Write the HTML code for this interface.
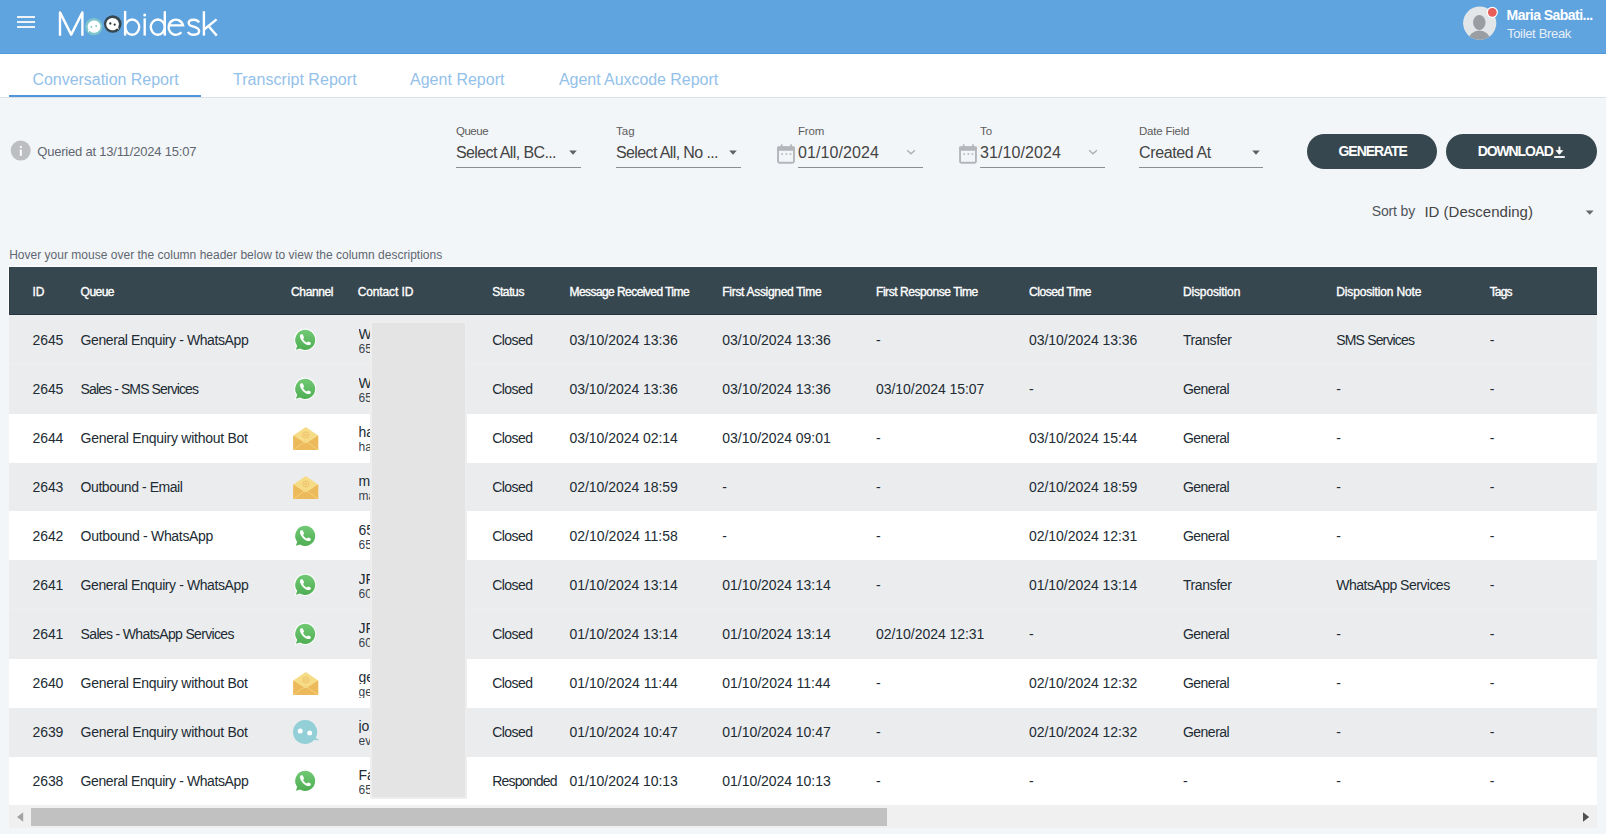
<!DOCTYPE html>
<html><head><meta charset="utf-8"><title>Moobidesk - Conversation Report</title>
<style>
html,body{margin:0;padding:0;}
body{width:1606px;height:834px;overflow:hidden;position:relative;background:#f3f6f9;font-family:"Liberation Sans",sans-serif;}
.t{position:absolute;white-space:nowrap;}
.b{position:absolute;}
svg{position:absolute;overflow:visible;}
</style></head><body>
<div class="b" style="left:0.00px;top:0.00px;width:1606.00px;height:54.00px;background:#5fa3df;"></div>
<div class="b" style="left:0.00px;top:53.00px;width:1606.00px;height:1.00px;background:#519ada;"></div>
<div class="b" style="left:16.50px;top:16.00px;width:18.50px;height:2.30px;background:#eef3f8;"></div>
<div class="b" style="left:16.50px;top:21.00px;width:18.50px;height:2.30px;background:#eef3f8;"></div>
<div class="b" style="left:16.50px;top:26.00px;width:18.50px;height:2.30px;background:#eef3f8;"></div>
<svg style="left:0;top:0" width="240" height="54" viewBox="0 0 240 54">
<g fill="none" stroke="#fff" stroke-width="2.4" stroke-linecap="butt" stroke-linejoin="miter">
<path d="M60 35.8 V12.4 L71.2 34.6 L82.4 12.4 V35.8" stroke-linejoin="round"/>
<path d="M125.1 10.9 V35.6"/>
<ellipse cx="132.2" cy="27.1" rx="7.0" ry="7.6"/>
<path d="M144.7 18.4 V35.6"/>
<ellipse cx="157.8" cy="27.1" rx="7.0" ry="7.6"/>
<path d="M164.8 11.2 V35.6"/>
<path d="M170 25.4 H183 A7.3 7.6 0 1 0 181.4 32.3"/>
<path d="M199 22.6 C198 20.3 196 19.7 193.6 19.7 C190.5 19.7 188.7 21.1 188.7 23 C188.7 25.2 190.8 26 193.6 26.7 C196.8 27.5 199.1 28.5 199.1 31.1 C199.1 33.5 197 34.8 193.6 34.8 C190.8 34.8 188.8 33.8 188 31.9"/>
<path d="M203.9 11.2 V35.6"/>
<path d="M216.6 19.4 L204.4 29.2"/>
<path d="M208.4 26 L216.8 35.6"/>
</g>
<circle cx="144.7" cy="15.1" r="1.5" fill="#fff"/>
<circle cx="93.8" cy="26.6" r="8.7" fill="#7fc6cc"/>
<path d="M94.3 20.4 a6.2 6.2 0 1 1 -4.7 10.3 l-1.8 1.8 l0.7 -2.9 a6.2 6.2 0 0 1 5.8 -9.2z" fill="#fff"/>
<circle cx="91.4" cy="27" r="0.9" fill="#7fc6cc"/><circle cx="96.2" cy="26" r="0.9" fill="#7fc6cc"/>
<circle cx="112.8" cy="24" r="8.8" fill="#37474f"/>
<path d="M112.4 17.9 a6.2 6.2 0 1 0 4.7 10.3 l1.8 1.7 l-0.7 -2.9 a6.2 6.2 0 0 0 -5.8 -9.1z" fill="#fff"/>
<circle cx="110.3" cy="23.5" r="1.15" fill="#263238"/><circle cx="114.7" cy="24.6" r="1.15" fill="#263238"/>
</svg>
<svg style="left:1440px;top:0" width="80" height="54" viewBox="1440 0 80 54">
<defs><clipPath id="avc"><circle cx="1479.7" cy="23.2" r="16.6"/></clipPath></defs>
<circle cx="1479.7" cy="23.2" r="16.6" fill="#e3e6e8"/>
<g clip-path="url(#avc)" fill="#9a9da2">
<ellipse cx="1479.3" cy="22.5" rx="6.2" ry="7.6"/>
<ellipse cx="1479.3" cy="40.5" rx="11" ry="10"/>
</g>
<circle cx="1492.3" cy="12.3" r="5.6" fill="#fff"/>
<circle cx="1492.3" cy="12.3" r="4.4" fill="#e85c5a"/>
</svg>
<div class="t" style="left:1506.60px;top:7.95px;font-size:14px;line-height:14px;color:#ffffff;font-weight:bold;letter-spacing:-0.542px;">Maria Sabati...</div>
<div class="t" style="left:1507.00px;top:27.30px;font-size:13px;line-height:13px;color:#e9eff6;letter-spacing:-0.328px;">Toilet Break</div>
<div class="b" style="left:0.00px;top:54.00px;width:1606.00px;height:43.00px;background:#fff;"></div>
<div class="b" style="left:0.00px;top:97.00px;width:1606.00px;height:1.00px;background:#dde1e5;"></div>
<div class="b" style="left:9.00px;top:94.50px;width:192.00px;height:2.50px;background:#4e95dc;"></div>
<div class="t" style="left:32.40px;top:71.86px;font-size:16px;line-height:16px;color:#93c1ea;letter-spacing:-0.024px;">Conversation Report</div>
<div class="t" style="left:233.00px;top:71.86px;font-size:16px;line-height:16px;color:#93c1ea;letter-spacing:0.036px;">Transcript Report</div>
<div class="t" style="left:410.00px;top:71.86px;font-size:16px;line-height:16px;color:#93c1ea;letter-spacing:0.020px;">Agent Report</div>
<div class="t" style="left:559.00px;top:71.86px;font-size:16px;line-height:16px;color:#93c1ea;letter-spacing:-0.052px;">Agent Auxcode Report</div>
<svg style="left:0;top:130px" width="40" height="40" viewBox="0 130 40 40">
<circle cx="20.7" cy="150.6" r="10" fill="#bdbec1"/>
<rect x="19.85" y="149.6" width="1.9" height="6.2" fill="#fff"/>
<rect x="19.85" y="146" width="1.9" height="1.9" fill="#fff"/>
</svg>
<div class="t" style="left:37.30px;top:145.20px;font-size:13px;line-height:13px;color:#5f6770;letter-spacing:-0.208px;">Queried at 13/11/2024 15:07</div>
<div class="t" style="left:456.00px;top:126.07px;font-size:11.5px;line-height:11.5px;color:#5c5c5c;letter-spacing:-0.500px;">Queue</div>
<div class="t" style="left:616.00px;top:126.07px;font-size:11.5px;line-height:11.5px;color:#5c5c5c;letter-spacing:0.023px;">Tag</div>
<div class="t" style="left:798.00px;top:126.07px;font-size:11.5px;line-height:11.5px;color:#5c5c5c;letter-spacing:-0.157px;">From</div>
<div class="t" style="left:980.00px;top:126.07px;font-size:11.5px;line-height:11.5px;color:#5c5c5c;letter-spacing:0.080px;">To</div>
<div class="t" style="left:1139.00px;top:126.07px;font-size:11.5px;line-height:11.5px;color:#5c5c5c;letter-spacing:-0.221px;">Date Field</div>
<div class="t" style="left:456.00px;top:145.26px;font-size:16px;line-height:16px;color:#444444;letter-spacing:-0.610px;">Select All, BC...</div>
<div class="t" style="left:616.00px;top:145.26px;font-size:16px;line-height:16px;color:#444444;letter-spacing:-0.615px;">Select All, No ...</div>
<div class="t" style="left:798.00px;top:145.26px;font-size:16px;line-height:16px;color:#444444;letter-spacing:0.084px;">01/10/2024</div>
<div class="t" style="left:980.00px;top:145.26px;font-size:16px;line-height:16px;color:#444444;letter-spacing:0.084px;">31/10/2024</div>
<div class="t" style="left:1139.00px;top:145.26px;font-size:16px;line-height:16px;color:#444444;letter-spacing:-0.367px;">Created At</div>
<div class="b" style="left:456.00px;top:166.50px;width:125.00px;height:1.30px;background:#8d8d8d;"></div>
<div class="b" style="left:616.00px;top:166.50px;width:124.50px;height:1.30px;background:#8d8d8d;"></div>
<div class="b" style="left:798.00px;top:166.50px;width:125.00px;height:1.30px;background:#8d8d8d;"></div>
<div class="b" style="left:980.00px;top:166.50px;width:125.00px;height:1.30px;background:#8d8d8d;"></div>
<div class="b" style="left:1139.00px;top:166.50px;width:124.00px;height:1.30px;background:#8d8d8d;"></div>
<svg style="left:567px;top:146px" width="12" height="12" viewBox="567 146 12 12"><path d="M569.2 150.4 L576.8 150.4 L573 154.7z" fill="#606060"/></svg>
<svg style="left:726.5px;top:146px" width="12" height="12" viewBox="726.5 146 12 12"><path d="M728.7 150.4 L736.3 150.4 L732.5 154.7z" fill="#606060"/></svg>
<svg style="left:1250px;top:146px" width="12" height="12" viewBox="1250 146 12 12"><path d="M1252.2 150.4 L1259.8 150.4 L1256 154.7z" fill="#606060"/></svg>
<svg style="left:904.6px;top:145px" width="12" height="12" viewBox="904.6 145 12 12"><path d="M906.7 150.3 L910.6 153.8 L914.5 150.3" fill="none" stroke="#aaadb2" stroke-width="1.3"/></svg>
<svg style="left:1086.8px;top:145px" width="12" height="12" viewBox="1086.8 145 12 12"><path d="M1088.8999999999999 150.3 L1092.8 153.8 L1096.7 150.3" fill="none" stroke="#aaadb2" stroke-width="1.3"/></svg>
<svg style="left:777.3px;top:144px" width="19" height="20" viewBox="0 0 19 20">
<rect x="1.05" y="3.3" width="15.9" height="15.45" rx="1.4" fill="none" stroke="#b3b6ba" stroke-width="1.9"/>
<rect x="0.1" y="2.4" width="17.8" height="4.3" rx="1" fill="#b3b6ba"/>
<rect x="3.8" y="0.4" width="1.8" height="2.4" fill="#b3b6ba"/><rect x="13.1" y="0.4" width="1.8" height="2.4" fill="#b3b6ba"/>
<rect x="4.3" y="9.2" width="1.7" height="1.7" fill="#b6b9bd"/><rect x="8.5" y="9.2" width="1.7" height="1.7" fill="#b6b9bd"/><rect x="12.6" y="9.2" width="1.7" height="1.7" fill="#b6b9bd"/>
</svg>
<svg style="left:959.4px;top:144px" width="19" height="20" viewBox="0 0 19 20">
<rect x="1.05" y="3.3" width="15.9" height="15.45" rx="1.4" fill="none" stroke="#b3b6ba" stroke-width="1.9"/>
<rect x="0.1" y="2.4" width="17.8" height="4.3" rx="1" fill="#b3b6ba"/>
<rect x="3.8" y="0.4" width="1.8" height="2.4" fill="#b3b6ba"/><rect x="13.1" y="0.4" width="1.8" height="2.4" fill="#b3b6ba"/>
<rect x="4.3" y="9.2" width="1.7" height="1.7" fill="#b6b9bd"/><rect x="8.5" y="9.2" width="1.7" height="1.7" fill="#b6b9bd"/><rect x="12.6" y="9.2" width="1.7" height="1.7" fill="#b6b9bd"/>
</svg>
<div class="b" style="left:1307.00px;top:134.20px;width:130.20px;height:34.80px;background:#37474f;border-radius:17.4px;"></div>
<div class="b" style="left:1446.20px;top:134.20px;width:150.40px;height:34.80px;background:#37474f;border-radius:17.4px;"></div>
<div class="t" style="left:1338.50px;top:144.45px;font-size:14px;line-height:14px;color:#ffffff;font-weight:bold;letter-spacing:-1.046px;">GENERATE</div>
<div class="t" style="left:1477.70px;top:144.45px;font-size:14px;line-height:14px;color:#ffffff;font-weight:bold;letter-spacing:-1.123px;">DOWNLOAD</div>
<svg style="left:1553px;top:144px" width="13" height="15" viewBox="1553 144 13 15">
<path d="M1559.4 146.6 V153.5" stroke="#fff" stroke-width="1.9"/>
<path d="M1556.1 150.6 L1559.4 154.3 L1562.7 150.6z" fill="#fff" stroke="#fff" stroke-width="0.8" stroke-linejoin="round"/>
<rect x="1554.2" y="156.1" width="10.6" height="1.8" fill="#fff"/>
</svg>
<div class="t" style="left:1371.80px;top:203.95px;font-size:14px;line-height:14px;color:#4f555b;letter-spacing:-0.163px;">Sort by</div>
<div class="t" style="left:1424.40px;top:203.90px;font-size:15px;line-height:15px;color:#444444;letter-spacing:0.014px;">ID (Descending)</div>
<svg style="left:1580px;top:206px" width="20" height="14" viewBox="1580 206 20 14"><path d="M1585.8 210.5 L1593.6 210.5 L1589.7 214.7z" fill="#686868"/></svg>
<div class="t" style="left:9.20px;top:248.84px;font-size:12px;line-height:12px;color:#5f6770;letter-spacing:0.011px;">Hover your mouse over the column header below to view the column descriptions</div>
<div class="b" style="left:8.00px;top:266.00px;width:1589.00px;height:49.00px;background:#ffffff;"></div>
<div class="b" style="left:9.00px;top:267.00px;width:1588.00px;height:48.00px;background:#37474f;"></div>
<div class="b" style="left:9.00px;top:314.00px;width:1588.00px;height:1.00px;background:#263441;"></div>
<div class="b" style="left:9.00px;top:267.00px;width:1.00px;height:47.00px;background:#2e3c46;"></div>
<div class="t" style="left:32.60px;top:285.94px;font-size:12px;line-height:12px;color:#ffffff;letter-spacing:-0.250px;-webkit-text-stroke:0.35px #fff;">ID</div>
<div class="t" style="left:80.60px;top:285.94px;font-size:12px;line-height:12px;color:#ffffff;letter-spacing:-0.523px;-webkit-text-stroke:0.35px #fff;">Queue</div>
<div class="t" style="left:291.10px;top:285.94px;font-size:12px;line-height:12px;color:#ffffff;letter-spacing:-0.386px;-webkit-text-stroke:0.35px #fff;">Channel</div>
<div class="t" style="left:357.70px;top:285.94px;font-size:12px;line-height:12px;color:#ffffff;letter-spacing:-0.117px;-webkit-text-stroke:0.35px #fff;">Contact ID</div>
<div class="t" style="left:492.30px;top:285.94px;font-size:12px;line-height:12px;color:#ffffff;letter-spacing:-0.383px;-webkit-text-stroke:0.35px #fff;">Status</div>
<div class="t" style="left:569.50px;top:285.94px;font-size:12px;line-height:12px;color:#ffffff;letter-spacing:-0.566px;-webkit-text-stroke:0.35px #fff;">Message Received Time</div>
<div class="t" style="left:722.30px;top:285.94px;font-size:12px;line-height:12px;color:#ffffff;letter-spacing:-0.300px;-webkit-text-stroke:0.35px #fff;">First Assigned Time</div>
<div class="t" style="left:876.00px;top:285.94px;font-size:12px;line-height:12px;color:#ffffff;letter-spacing:-0.438px;-webkit-text-stroke:0.35px #fff;">First Response Time</div>
<div class="t" style="left:1029.00px;top:285.94px;font-size:12px;line-height:12px;color:#ffffff;letter-spacing:-0.428px;-webkit-text-stroke:0.35px #fff;">Closed Time</div>
<div class="t" style="left:1182.90px;top:285.94px;font-size:12px;line-height:12px;color:#ffffff;letter-spacing:-0.128px;-webkit-text-stroke:0.35px #fff;">Disposition</div>
<div class="t" style="left:1336.30px;top:285.94px;font-size:12px;line-height:12px;color:#ffffff;letter-spacing:-0.148px;-webkit-text-stroke:0.35px #fff;">Disposition Note</div>
<div class="t" style="left:1489.70px;top:285.94px;font-size:12px;line-height:12px;color:#ffffff;letter-spacing:-0.836px;-webkit-text-stroke:0.35px #fff;">Tags</div>
<div class="b" style="left:9.00px;top:315.00px;width:1588.00px;height:49.20px;background:#ebecee;"></div>
<div class="t" style="left:32.60px;top:333.05px;font-size:14px;line-height:14px;color:#212b33;letter-spacing:-0.117px;">2645</div>
<div class="t" style="left:80.60px;top:333.05px;font-size:14px;line-height:14px;color:#212b33;letter-spacing:-0.405px;">General Enquiry - WhatsApp</div>
<div class="t" style="left:492.30px;top:333.05px;font-size:14px;line-height:14px;color:#212b33;letter-spacing:-0.577px;">Closed</div>
<div class="t" style="left:569.50px;top:333.05px;font-size:14px;line-height:14px;color:#212b33;letter-spacing:-0.040px;">03/10/2024 13:36</div>
<div class="t" style="left:722.30px;top:333.05px;font-size:14px;line-height:14px;color:#212b33;letter-spacing:-0.040px;">03/10/2024 13:36</div>
<div class="t" style="left:876.00px;top:333.05px;font-size:14px;line-height:14px;color:#212b33;">-</div>
<div class="t" style="left:1029.00px;top:333.05px;font-size:14px;line-height:14px;color:#212b33;letter-spacing:-0.040px;">03/10/2024 13:36</div>
<div class="t" style="left:1182.90px;top:333.05px;font-size:14px;line-height:14px;color:#212b33;letter-spacing:-0.385px;">Transfer</div>
<div class="t" style="left:1336.30px;top:333.05px;font-size:14px;line-height:14px;color:#212b33;letter-spacing:-0.842px;">SMS Services</div>
<div class="t" style="left:1489.70px;top:333.05px;font-size:14px;line-height:14px;color:#212b33;">-</div>
<svg style="left:292.00px;top:327.20px" width="26" height="26" viewBox="0 0 26 26">
<defs><linearGradient id="wag0" x1="0" y1="0" x2="0" y2="1"><stop offset="0" stop-color="#72c975"/><stop offset="1" stop-color="#4eae52"/></linearGradient></defs>
<path d="M13 1.6 A11.2 11.2 0 1 1 7.6 22.6 L2.6 24 L4.2 19.3 A11.2 11.2 0 0 1 13 1.6z" fill="#fff" opacity="0.9"/>
<path d="M13 2.8 A10.1 10.1 0 1 1 8 21.6 L3.9 22.8 L5.2 18.9 A10.1 10.1 0 0 1 13 2.8z" fill="url(#wag0)"/>
<path d="M9.3 7.3 C8.3 7.6 7.9 8.6 8 9.6 C8.2 11.6 9.6 13.8 11.3 15.4 C13 17 15.2 18.1 16.9 18.1 C17.9 18.1 18.7 17.5 18.8 16.7 L18.9 16 C18.9 15.7 18.7 15.5 18.4 15.4 L16.6 14.6 C16.3 14.5 16 14.6 15.8 14.8 L15 15.6 C13.4 14.9 11.9 13.6 11.1 12 L11.8 11.1 C12 10.9 12 10.6 11.9 10.3 L11.1 8.1 C10.9 7.6 10.4 7.2 9.9 7.2z" fill="#fff"/>
</svg>
<div class="t" style="left:358.50px;top:326.75px;font-size:14px;line-height:14px;color:#212b33;width:12px;overflow:hidden;">Wxxxxxx</div>
<div class="t" style="left:358.50px;top:342.74px;font-size:12px;line-height:12px;color:#3a434b;width:12px;overflow:hidden;">65912345</div>
<div class="b" style="left:9.00px;top:364.20px;width:1588.00px;height:49.60px;background:#ebecee;"></div>
<div class="t" style="left:32.60px;top:382.05px;font-size:14px;line-height:14px;color:#212b33;letter-spacing:-0.117px;">2645</div>
<div class="t" style="left:80.60px;top:382.05px;font-size:14px;line-height:14px;color:#212b33;letter-spacing:-0.893px;">Sales - SMS Services</div>
<div class="t" style="left:492.30px;top:382.05px;font-size:14px;line-height:14px;color:#212b33;letter-spacing:-0.577px;">Closed</div>
<div class="t" style="left:569.50px;top:382.05px;font-size:14px;line-height:14px;color:#212b33;letter-spacing:-0.040px;">03/10/2024 13:36</div>
<div class="t" style="left:722.30px;top:382.05px;font-size:14px;line-height:14px;color:#212b33;letter-spacing:-0.040px;">03/10/2024 13:36</div>
<div class="t" style="left:876.00px;top:382.05px;font-size:14px;line-height:14px;color:#212b33;letter-spacing:-0.040px;">03/10/2024 15:07</div>
<div class="t" style="left:1029.00px;top:382.05px;font-size:14px;line-height:14px;color:#212b33;">-</div>
<div class="t" style="left:1182.90px;top:382.05px;font-size:14px;line-height:14px;color:#212b33;letter-spacing:-0.497px;">General</div>
<div class="t" style="left:1336.30px;top:382.05px;font-size:14px;line-height:14px;color:#212b33;">-</div>
<div class="t" style="left:1489.70px;top:382.05px;font-size:14px;line-height:14px;color:#212b33;">-</div>
<svg style="left:292.00px;top:376.20px" width="26" height="26" viewBox="0 0 26 26">
<defs><linearGradient id="wag1" x1="0" y1="0" x2="0" y2="1"><stop offset="0" stop-color="#72c975"/><stop offset="1" stop-color="#4eae52"/></linearGradient></defs>
<path d="M13 1.6 A11.2 11.2 0 1 1 7.6 22.6 L2.6 24 L4.2 19.3 A11.2 11.2 0 0 1 13 1.6z" fill="#fff" opacity="0.9"/>
<path d="M13 2.8 A10.1 10.1 0 1 1 8 21.6 L3.9 22.8 L5.2 18.9 A10.1 10.1 0 0 1 13 2.8z" fill="url(#wag1)"/>
<path d="M9.3 7.3 C8.3 7.6 7.9 8.6 8 9.6 C8.2 11.6 9.6 13.8 11.3 15.4 C13 17 15.2 18.1 16.9 18.1 C17.9 18.1 18.7 17.5 18.8 16.7 L18.9 16 C18.9 15.7 18.7 15.5 18.4 15.4 L16.6 14.6 C16.3 14.5 16 14.6 15.8 14.8 L15 15.6 C13.4 14.9 11.9 13.6 11.1 12 L11.8 11.1 C12 10.9 12 10.6 11.9 10.3 L11.1 8.1 C10.9 7.6 10.4 7.2 9.9 7.2z" fill="#fff"/>
</svg>
<div class="t" style="left:358.50px;top:375.75px;font-size:14px;line-height:14px;color:#212b33;width:12px;overflow:hidden;">Wxxxxxx</div>
<div class="t" style="left:358.50px;top:391.74px;font-size:12px;line-height:12px;color:#3a434b;width:12px;overflow:hidden;">65912345</div>
<div class="b" style="left:9.00px;top:413.80px;width:1588.00px;height:48.80px;background:#ffffff;"></div>
<div class="t" style="left:32.60px;top:431.05px;font-size:14px;line-height:14px;color:#212b33;letter-spacing:-0.117px;">2644</div>
<div class="t" style="left:80.60px;top:431.05px;font-size:14px;line-height:14px;color:#212b33;letter-spacing:-0.269px;">General Enquiry without Bot</div>
<div class="t" style="left:492.30px;top:431.05px;font-size:14px;line-height:14px;color:#212b33;letter-spacing:-0.577px;">Closed</div>
<div class="t" style="left:569.50px;top:431.05px;font-size:14px;line-height:14px;color:#212b33;letter-spacing:-0.040px;">03/10/2024 02:14</div>
<div class="t" style="left:722.30px;top:431.05px;font-size:14px;line-height:14px;color:#212b33;letter-spacing:-0.040px;">03/10/2024 09:01</div>
<div class="t" style="left:876.00px;top:431.05px;font-size:14px;line-height:14px;color:#212b33;">-</div>
<div class="t" style="left:1029.00px;top:431.05px;font-size:14px;line-height:14px;color:#212b33;letter-spacing:-0.040px;">03/10/2024 15:44</div>
<div class="t" style="left:1182.90px;top:431.05px;font-size:14px;line-height:14px;color:#212b33;letter-spacing:-0.497px;">General</div>
<div class="t" style="left:1336.30px;top:431.05px;font-size:14px;line-height:14px;color:#212b33;">-</div>
<div class="t" style="left:1489.70px;top:431.05px;font-size:14px;line-height:14px;color:#212b33;">-</div>
<svg style="left:291.70px;top:426.70px" width="28" height="26" viewBox="0 0 28 26">
<path d="M1.2 8.6 L13.8 0 L26.2 8.6 V23 H1.2z" fill="#f7dc88"/>
<path d="M1.2 8.6 L13.8 16.4 L26.2 8.6 V23 H1.2z" fill="#ecb95b"/>
<path d="M1.8 22.6 L13.8 14.2 L25.6 22.6" fill="none" stroke="#f5d27c" stroke-width="1"/>
<circle cx="13.8" cy="8" r="3.1" fill="none" stroke="#ecbd66" stroke-width="0.9"/>
<circle cx="13.8" cy="8.1" r="1.2" fill="none" stroke="#ecbd66" stroke-width="0.8"/>
</svg>
<div class="t" style="left:358.50px;top:424.75px;font-size:14px;line-height:14px;color:#212b33;width:12px;overflow:hidden;">haxxxxxx</div>
<div class="t" style="left:358.50px;top:440.74px;font-size:12px;line-height:12px;color:#3a434b;width:12px;overflow:hidden;">ha912345</div>
<div class="b" style="left:9.00px;top:462.60px;width:1588.00px;height:48.70px;background:#ebecee;"></div>
<div class="t" style="left:32.60px;top:480.05px;font-size:14px;line-height:14px;color:#212b33;letter-spacing:-0.117px;">2643</div>
<div class="t" style="left:80.60px;top:480.05px;font-size:14px;line-height:14px;color:#212b33;letter-spacing:-0.444px;">Outbound - Email</div>
<div class="t" style="left:492.30px;top:480.05px;font-size:14px;line-height:14px;color:#212b33;letter-spacing:-0.577px;">Closed</div>
<div class="t" style="left:569.50px;top:480.05px;font-size:14px;line-height:14px;color:#212b33;letter-spacing:-0.040px;">02/10/2024 18:59</div>
<div class="t" style="left:722.30px;top:480.05px;font-size:14px;line-height:14px;color:#212b33;">-</div>
<div class="t" style="left:876.00px;top:480.05px;font-size:14px;line-height:14px;color:#212b33;">-</div>
<div class="t" style="left:1029.00px;top:480.05px;font-size:14px;line-height:14px;color:#212b33;letter-spacing:-0.040px;">02/10/2024 18:59</div>
<div class="t" style="left:1182.90px;top:480.05px;font-size:14px;line-height:14px;color:#212b33;letter-spacing:-0.497px;">General</div>
<div class="t" style="left:1336.30px;top:480.05px;font-size:14px;line-height:14px;color:#212b33;">-</div>
<div class="t" style="left:1489.70px;top:480.05px;font-size:14px;line-height:14px;color:#212b33;">-</div>
<svg style="left:291.70px;top:475.70px" width="28" height="26" viewBox="0 0 28 26">
<path d="M1.2 8.6 L13.8 0 L26.2 8.6 V23 H1.2z" fill="#f7dc88"/>
<path d="M1.2 8.6 L13.8 16.4 L26.2 8.6 V23 H1.2z" fill="#ecb95b"/>
<path d="M1.8 22.6 L13.8 14.2 L25.6 22.6" fill="none" stroke="#f5d27c" stroke-width="1"/>
<circle cx="13.8" cy="8" r="3.1" fill="none" stroke="#ecbd66" stroke-width="0.9"/>
<circle cx="13.8" cy="8.1" r="1.2" fill="none" stroke="#ecbd66" stroke-width="0.8"/>
</svg>
<div class="t" style="left:358.50px;top:473.75px;font-size:14px;line-height:14px;color:#212b33;width:12px;overflow:hidden;">maxxxxxx</div>
<div class="t" style="left:358.50px;top:489.74px;font-size:12px;line-height:12px;color:#3a434b;width:12px;overflow:hidden;">ma912345</div>
<div class="b" style="left:9.00px;top:511.30px;width:1588.00px;height:48.80px;background:#ffffff;"></div>
<div class="t" style="left:32.60px;top:529.05px;font-size:14px;line-height:14px;color:#212b33;letter-spacing:-0.117px;">2642</div>
<div class="t" style="left:80.60px;top:529.05px;font-size:14px;line-height:14px;color:#212b33;letter-spacing:-0.320px;">Outbound - WhatsApp</div>
<div class="t" style="left:492.30px;top:529.05px;font-size:14px;line-height:14px;color:#212b33;letter-spacing:-0.577px;">Closed</div>
<div class="t" style="left:569.50px;top:529.05px;font-size:14px;line-height:14px;color:#212b33;letter-spacing:0.025px;">02/10/2024 11:58</div>
<div class="t" style="left:722.30px;top:529.05px;font-size:14px;line-height:14px;color:#212b33;">-</div>
<div class="t" style="left:876.00px;top:529.05px;font-size:14px;line-height:14px;color:#212b33;">-</div>
<div class="t" style="left:1029.00px;top:529.05px;font-size:14px;line-height:14px;color:#212b33;letter-spacing:-0.040px;">02/10/2024 12:31</div>
<div class="t" style="left:1182.90px;top:529.05px;font-size:14px;line-height:14px;color:#212b33;letter-spacing:-0.497px;">General</div>
<div class="t" style="left:1336.30px;top:529.05px;font-size:14px;line-height:14px;color:#212b33;">-</div>
<div class="t" style="left:1489.70px;top:529.05px;font-size:14px;line-height:14px;color:#212b33;">-</div>
<svg style="left:292.00px;top:523.20px" width="26" height="26" viewBox="0 0 26 26">
<defs><linearGradient id="wag4" x1="0" y1="0" x2="0" y2="1"><stop offset="0" stop-color="#72c975"/><stop offset="1" stop-color="#4eae52"/></linearGradient></defs>
<path d="M13 1.6 A11.2 11.2 0 1 1 7.6 22.6 L2.6 24 L4.2 19.3 A11.2 11.2 0 0 1 13 1.6z" fill="#fff" opacity="0.9"/>
<path d="M13 2.8 A10.1 10.1 0 1 1 8 21.6 L3.9 22.8 L5.2 18.9 A10.1 10.1 0 0 1 13 2.8z" fill="url(#wag4)"/>
<path d="M9.3 7.3 C8.3 7.6 7.9 8.6 8 9.6 C8.2 11.6 9.6 13.8 11.3 15.4 C13 17 15.2 18.1 16.9 18.1 C17.9 18.1 18.7 17.5 18.8 16.7 L18.9 16 C18.9 15.7 18.7 15.5 18.4 15.4 L16.6 14.6 C16.3 14.5 16 14.6 15.8 14.8 L15 15.6 C13.4 14.9 11.9 13.6 11.1 12 L11.8 11.1 C12 10.9 12 10.6 11.9 10.3 L11.1 8.1 C10.9 7.6 10.4 7.2 9.9 7.2z" fill="#fff"/>
</svg>
<div class="t" style="left:358.50px;top:522.75px;font-size:14px;line-height:14px;color:#212b33;width:12px;overflow:hidden;">65xxxxxx</div>
<div class="t" style="left:358.50px;top:538.74px;font-size:12px;line-height:12px;color:#3a434b;width:12px;overflow:hidden;">65912345</div>
<div class="b" style="left:9.00px;top:560.10px;width:1588.00px;height:49.30px;background:#ebecee;"></div>
<div class="t" style="left:32.60px;top:578.05px;font-size:14px;line-height:14px;color:#212b33;letter-spacing:-0.117px;">2641</div>
<div class="t" style="left:80.60px;top:578.05px;font-size:14px;line-height:14px;color:#212b33;letter-spacing:-0.405px;">General Enquiry - WhatsApp</div>
<div class="t" style="left:492.30px;top:578.05px;font-size:14px;line-height:14px;color:#212b33;letter-spacing:-0.577px;">Closed</div>
<div class="t" style="left:569.50px;top:578.05px;font-size:14px;line-height:14px;color:#212b33;letter-spacing:-0.040px;">01/10/2024 13:14</div>
<div class="t" style="left:722.30px;top:578.05px;font-size:14px;line-height:14px;color:#212b33;letter-spacing:-0.040px;">01/10/2024 13:14</div>
<div class="t" style="left:876.00px;top:578.05px;font-size:14px;line-height:14px;color:#212b33;">-</div>
<div class="t" style="left:1029.00px;top:578.05px;font-size:14px;line-height:14px;color:#212b33;letter-spacing:-0.040px;">01/10/2024 13:14</div>
<div class="t" style="left:1182.90px;top:578.05px;font-size:14px;line-height:14px;color:#212b33;letter-spacing:-0.385px;">Transfer</div>
<div class="t" style="left:1336.30px;top:578.05px;font-size:14px;line-height:14px;color:#212b33;letter-spacing:-0.520px;">WhatsApp Services</div>
<div class="t" style="left:1489.70px;top:578.05px;font-size:14px;line-height:14px;color:#212b33;">-</div>
<svg style="left:292.00px;top:572.20px" width="26" height="26" viewBox="0 0 26 26">
<defs><linearGradient id="wag5" x1="0" y1="0" x2="0" y2="1"><stop offset="0" stop-color="#72c975"/><stop offset="1" stop-color="#4eae52"/></linearGradient></defs>
<path d="M13 1.6 A11.2 11.2 0 1 1 7.6 22.6 L2.6 24 L4.2 19.3 A11.2 11.2 0 0 1 13 1.6z" fill="#fff" opacity="0.9"/>
<path d="M13 2.8 A10.1 10.1 0 1 1 8 21.6 L3.9 22.8 L5.2 18.9 A10.1 10.1 0 0 1 13 2.8z" fill="url(#wag5)"/>
<path d="M9.3 7.3 C8.3 7.6 7.9 8.6 8 9.6 C8.2 11.6 9.6 13.8 11.3 15.4 C13 17 15.2 18.1 16.9 18.1 C17.9 18.1 18.7 17.5 18.8 16.7 L18.9 16 C18.9 15.7 18.7 15.5 18.4 15.4 L16.6 14.6 C16.3 14.5 16 14.6 15.8 14.8 L15 15.6 C13.4 14.9 11.9 13.6 11.1 12 L11.8 11.1 C12 10.9 12 10.6 11.9 10.3 L11.1 8.1 C10.9 7.6 10.4 7.2 9.9 7.2z" fill="#fff"/>
</svg>
<div class="t" style="left:358.50px;top:571.75px;font-size:14px;line-height:14px;color:#212b33;width:12px;overflow:hidden;">JFxxxxxx</div>
<div class="t" style="left:358.50px;top:587.74px;font-size:12px;line-height:12px;color:#3a434b;width:12px;overflow:hidden;">60912345</div>
<div class="b" style="left:9.00px;top:609.40px;width:1588.00px;height:49.40px;background:#ebecee;"></div>
<div class="t" style="left:32.60px;top:627.05px;font-size:14px;line-height:14px;color:#212b33;letter-spacing:-0.117px;">2641</div>
<div class="t" style="left:80.60px;top:627.05px;font-size:14px;line-height:14px;color:#212b33;letter-spacing:-0.656px;">Sales - WhatsApp Services</div>
<div class="t" style="left:492.30px;top:627.05px;font-size:14px;line-height:14px;color:#212b33;letter-spacing:-0.577px;">Closed</div>
<div class="t" style="left:569.50px;top:627.05px;font-size:14px;line-height:14px;color:#212b33;letter-spacing:-0.040px;">01/10/2024 13:14</div>
<div class="t" style="left:722.30px;top:627.05px;font-size:14px;line-height:14px;color:#212b33;letter-spacing:-0.040px;">01/10/2024 13:14</div>
<div class="t" style="left:876.00px;top:627.05px;font-size:14px;line-height:14px;color:#212b33;letter-spacing:-0.040px;">02/10/2024 12:31</div>
<div class="t" style="left:1029.00px;top:627.05px;font-size:14px;line-height:14px;color:#212b33;">-</div>
<div class="t" style="left:1182.90px;top:627.05px;font-size:14px;line-height:14px;color:#212b33;letter-spacing:-0.497px;">General</div>
<div class="t" style="left:1336.30px;top:627.05px;font-size:14px;line-height:14px;color:#212b33;">-</div>
<div class="t" style="left:1489.70px;top:627.05px;font-size:14px;line-height:14px;color:#212b33;">-</div>
<svg style="left:292.00px;top:621.20px" width="26" height="26" viewBox="0 0 26 26">
<defs><linearGradient id="wag6" x1="0" y1="0" x2="0" y2="1"><stop offset="0" stop-color="#72c975"/><stop offset="1" stop-color="#4eae52"/></linearGradient></defs>
<path d="M13 1.6 A11.2 11.2 0 1 1 7.6 22.6 L2.6 24 L4.2 19.3 A11.2 11.2 0 0 1 13 1.6z" fill="#fff" opacity="0.9"/>
<path d="M13 2.8 A10.1 10.1 0 1 1 8 21.6 L3.9 22.8 L5.2 18.9 A10.1 10.1 0 0 1 13 2.8z" fill="url(#wag6)"/>
<path d="M9.3 7.3 C8.3 7.6 7.9 8.6 8 9.6 C8.2 11.6 9.6 13.8 11.3 15.4 C13 17 15.2 18.1 16.9 18.1 C17.9 18.1 18.7 17.5 18.8 16.7 L18.9 16 C18.9 15.7 18.7 15.5 18.4 15.4 L16.6 14.6 C16.3 14.5 16 14.6 15.8 14.8 L15 15.6 C13.4 14.9 11.9 13.6 11.1 12 L11.8 11.1 C12 10.9 12 10.6 11.9 10.3 L11.1 8.1 C10.9 7.6 10.4 7.2 9.9 7.2z" fill="#fff"/>
</svg>
<div class="t" style="left:358.50px;top:620.75px;font-size:14px;line-height:14px;color:#212b33;width:12px;overflow:hidden;">JFxxxxxx</div>
<div class="t" style="left:358.50px;top:636.74px;font-size:12px;line-height:12px;color:#3a434b;width:12px;overflow:hidden;">60912345</div>
<div class="b" style="left:9.00px;top:658.80px;width:1588.00px;height:49.00px;background:#ffffff;"></div>
<div class="t" style="left:32.60px;top:676.05px;font-size:14px;line-height:14px;color:#212b33;letter-spacing:-0.117px;">2640</div>
<div class="t" style="left:80.60px;top:676.05px;font-size:14px;line-height:14px;color:#212b33;letter-spacing:-0.269px;">General Enquiry without Bot</div>
<div class="t" style="left:492.30px;top:676.05px;font-size:14px;line-height:14px;color:#212b33;letter-spacing:-0.577px;">Closed</div>
<div class="t" style="left:569.50px;top:676.05px;font-size:14px;line-height:14px;color:#212b33;letter-spacing:0.025px;">01/10/2024 11:44</div>
<div class="t" style="left:722.30px;top:676.05px;font-size:14px;line-height:14px;color:#212b33;letter-spacing:0.025px;">01/10/2024 11:44</div>
<div class="t" style="left:876.00px;top:676.05px;font-size:14px;line-height:14px;color:#212b33;">-</div>
<div class="t" style="left:1029.00px;top:676.05px;font-size:14px;line-height:14px;color:#212b33;letter-spacing:-0.040px;">02/10/2024 12:32</div>
<div class="t" style="left:1182.90px;top:676.05px;font-size:14px;line-height:14px;color:#212b33;letter-spacing:-0.497px;">General</div>
<div class="t" style="left:1336.30px;top:676.05px;font-size:14px;line-height:14px;color:#212b33;">-</div>
<div class="t" style="left:1489.70px;top:676.05px;font-size:14px;line-height:14px;color:#212b33;">-</div>
<svg style="left:291.70px;top:671.70px" width="28" height="26" viewBox="0 0 28 26">
<path d="M1.2 8.6 L13.8 0 L26.2 8.6 V23 H1.2z" fill="#f7dc88"/>
<path d="M1.2 8.6 L13.8 16.4 L26.2 8.6 V23 H1.2z" fill="#ecb95b"/>
<path d="M1.8 22.6 L13.8 14.2 L25.6 22.6" fill="none" stroke="#f5d27c" stroke-width="1"/>
<circle cx="13.8" cy="8" r="3.1" fill="none" stroke="#ecbd66" stroke-width="0.9"/>
<circle cx="13.8" cy="8.1" r="1.2" fill="none" stroke="#ecbd66" stroke-width="0.8"/>
</svg>
<div class="t" style="left:358.50px;top:669.75px;font-size:14px;line-height:14px;color:#212b33;width:12px;overflow:hidden;">gexxxxxx</div>
<div class="t" style="left:358.50px;top:685.74px;font-size:12px;line-height:12px;color:#3a434b;width:12px;overflow:hidden;">ge912345</div>
<div class="b" style="left:9.00px;top:707.80px;width:1588.00px;height:49.10px;background:#ebecee;"></div>
<div class="t" style="left:32.60px;top:725.05px;font-size:14px;line-height:14px;color:#212b33;letter-spacing:-0.117px;">2639</div>
<div class="t" style="left:80.60px;top:725.05px;font-size:14px;line-height:14px;color:#212b33;letter-spacing:-0.269px;">General Enquiry without Bot</div>
<div class="t" style="left:492.30px;top:725.05px;font-size:14px;line-height:14px;color:#212b33;letter-spacing:-0.577px;">Closed</div>
<div class="t" style="left:569.50px;top:725.05px;font-size:14px;line-height:14px;color:#212b33;letter-spacing:-0.040px;">01/10/2024 10:47</div>
<div class="t" style="left:722.30px;top:725.05px;font-size:14px;line-height:14px;color:#212b33;letter-spacing:-0.040px;">01/10/2024 10:47</div>
<div class="t" style="left:876.00px;top:725.05px;font-size:14px;line-height:14px;color:#212b33;">-</div>
<div class="t" style="left:1029.00px;top:725.05px;font-size:14px;line-height:14px;color:#212b33;letter-spacing:-0.040px;">02/10/2024 12:32</div>
<div class="t" style="left:1182.90px;top:725.05px;font-size:14px;line-height:14px;color:#212b33;letter-spacing:-0.497px;">General</div>
<div class="t" style="left:1336.30px;top:725.05px;font-size:14px;line-height:14px;color:#212b33;">-</div>
<div class="t" style="left:1489.70px;top:725.05px;font-size:14px;line-height:14px;color:#212b33;">-</div>
<svg style="left:291.00px;top:717.50px" width="30" height="28" viewBox="0 0 30 28">
<path d="M14 2 A12 12 0 1 0 23 21.9 L28.8 22.3 L24.6 19.9 A12 12 0 0 0 14 2z" fill="#93cfd6"/>
<circle cx="9.2" cy="12.9" r="2.5" fill="#fff"/><circle cx="18.7" cy="14.9" r="2.5" fill="#fff"/>
</svg>
<div class="t" style="left:358.50px;top:718.75px;font-size:14px;line-height:14px;color:#212b33;width:12px;overflow:hidden;">joxxxxxx</div>
<div class="t" style="left:358.50px;top:734.74px;font-size:12px;line-height:12px;color:#3a434b;width:12px;overflow:hidden;">ev912345</div>
<div class="b" style="left:9.00px;top:756.90px;width:1588.00px;height:48.40px;background:#ffffff;"></div>
<div class="t" style="left:32.60px;top:774.05px;font-size:14px;line-height:14px;color:#212b33;letter-spacing:-0.117px;">2638</div>
<div class="t" style="left:80.60px;top:774.05px;font-size:14px;line-height:14px;color:#212b33;letter-spacing:-0.405px;">General Enquiry - WhatsApp</div>
<div class="t" style="left:492.30px;top:774.05px;font-size:14px;line-height:14px;color:#212b33;letter-spacing:-0.798px;">Responded</div>
<div class="t" style="left:569.50px;top:774.05px;font-size:14px;line-height:14px;color:#212b33;letter-spacing:-0.040px;">01/10/2024 10:13</div>
<div class="t" style="left:722.30px;top:774.05px;font-size:14px;line-height:14px;color:#212b33;letter-spacing:-0.040px;">01/10/2024 10:13</div>
<div class="t" style="left:876.00px;top:774.05px;font-size:14px;line-height:14px;color:#212b33;">-</div>
<div class="t" style="left:1029.00px;top:774.05px;font-size:14px;line-height:14px;color:#212b33;">-</div>
<div class="t" style="left:1182.90px;top:774.05px;font-size:14px;line-height:14px;color:#212b33;">-</div>
<div class="t" style="left:1336.30px;top:774.05px;font-size:14px;line-height:14px;color:#212b33;">-</div>
<div class="t" style="left:1489.70px;top:774.05px;font-size:14px;line-height:14px;color:#212b33;">-</div>
<svg style="left:292.00px;top:768.20px" width="26" height="26" viewBox="0 0 26 26">
<defs><linearGradient id="wag9" x1="0" y1="0" x2="0" y2="1"><stop offset="0" stop-color="#72c975"/><stop offset="1" stop-color="#4eae52"/></linearGradient></defs>
<path d="M13 1.6 A11.2 11.2 0 1 1 7.6 22.6 L2.6 24 L4.2 19.3 A11.2 11.2 0 0 1 13 1.6z" fill="#fff" opacity="0.9"/>
<path d="M13 2.8 A10.1 10.1 0 1 1 8 21.6 L3.9 22.8 L5.2 18.9 A10.1 10.1 0 0 1 13 2.8z" fill="url(#wag9)"/>
<path d="M9.3 7.3 C8.3 7.6 7.9 8.6 8 9.6 C8.2 11.6 9.6 13.8 11.3 15.4 C13 17 15.2 18.1 16.9 18.1 C17.9 18.1 18.7 17.5 18.8 16.7 L18.9 16 C18.9 15.7 18.7 15.5 18.4 15.4 L16.6 14.6 C16.3 14.5 16 14.6 15.8 14.8 L15 15.6 C13.4 14.9 11.9 13.6 11.1 12 L11.8 11.1 C12 10.9 12 10.6 11.9 10.3 L11.1 8.1 C10.9 7.6 10.4 7.2 9.9 7.2z" fill="#fff"/>
</svg>
<div class="t" style="left:358.50px;top:767.75px;font-size:14px;line-height:14px;color:#212b33;width:12px;overflow:hidden;">Faxxxxxx</div>
<div class="t" style="left:358.50px;top:783.74px;font-size:12px;line-height:12px;color:#3a434b;width:12px;overflow:hidden;">65912345</div>
<div class="b" style="left:9.00px;top:364.20px;width:1588.00px;height:1.00px;background:#eeeff0;"></div>
<div class="b" style="left:9.00px;top:609.40px;width:1588.00px;height:1.00px;background:#eeeff0;"></div>
<div class="b" style="left:370.20px;top:321.20px;width:96.80px;height:477.50px;background:#eeeeee;"></div>
<div class="b" style="left:372.20px;top:323.20px;width:92.80px;height:473.50px;background:#e4e4e4;"></div>
<div class="b" style="left:9.00px;top:805.20px;width:1588.00px;height:22.40px;background:#f0f0f0;"></div>
<div class="b" style="left:31.00px;top:808.30px;width:855.90px;height:17.60px;background:#c1c1c1;"></div>
<svg style="left:12px;top:808px" width="16" height="18" viewBox="12 808 16 18"><path d="M23.2 812.2 L17 817 L23.2 821.8z" fill="#a3a3a3"/></svg>
<svg style="left:1578px;top:808px" width="16" height="18" viewBox="1578 808 16 18"><path d="M1583 812.2 L1589.2 817 L1583 821.8z" fill="#505050"/></svg>
</body></html>
